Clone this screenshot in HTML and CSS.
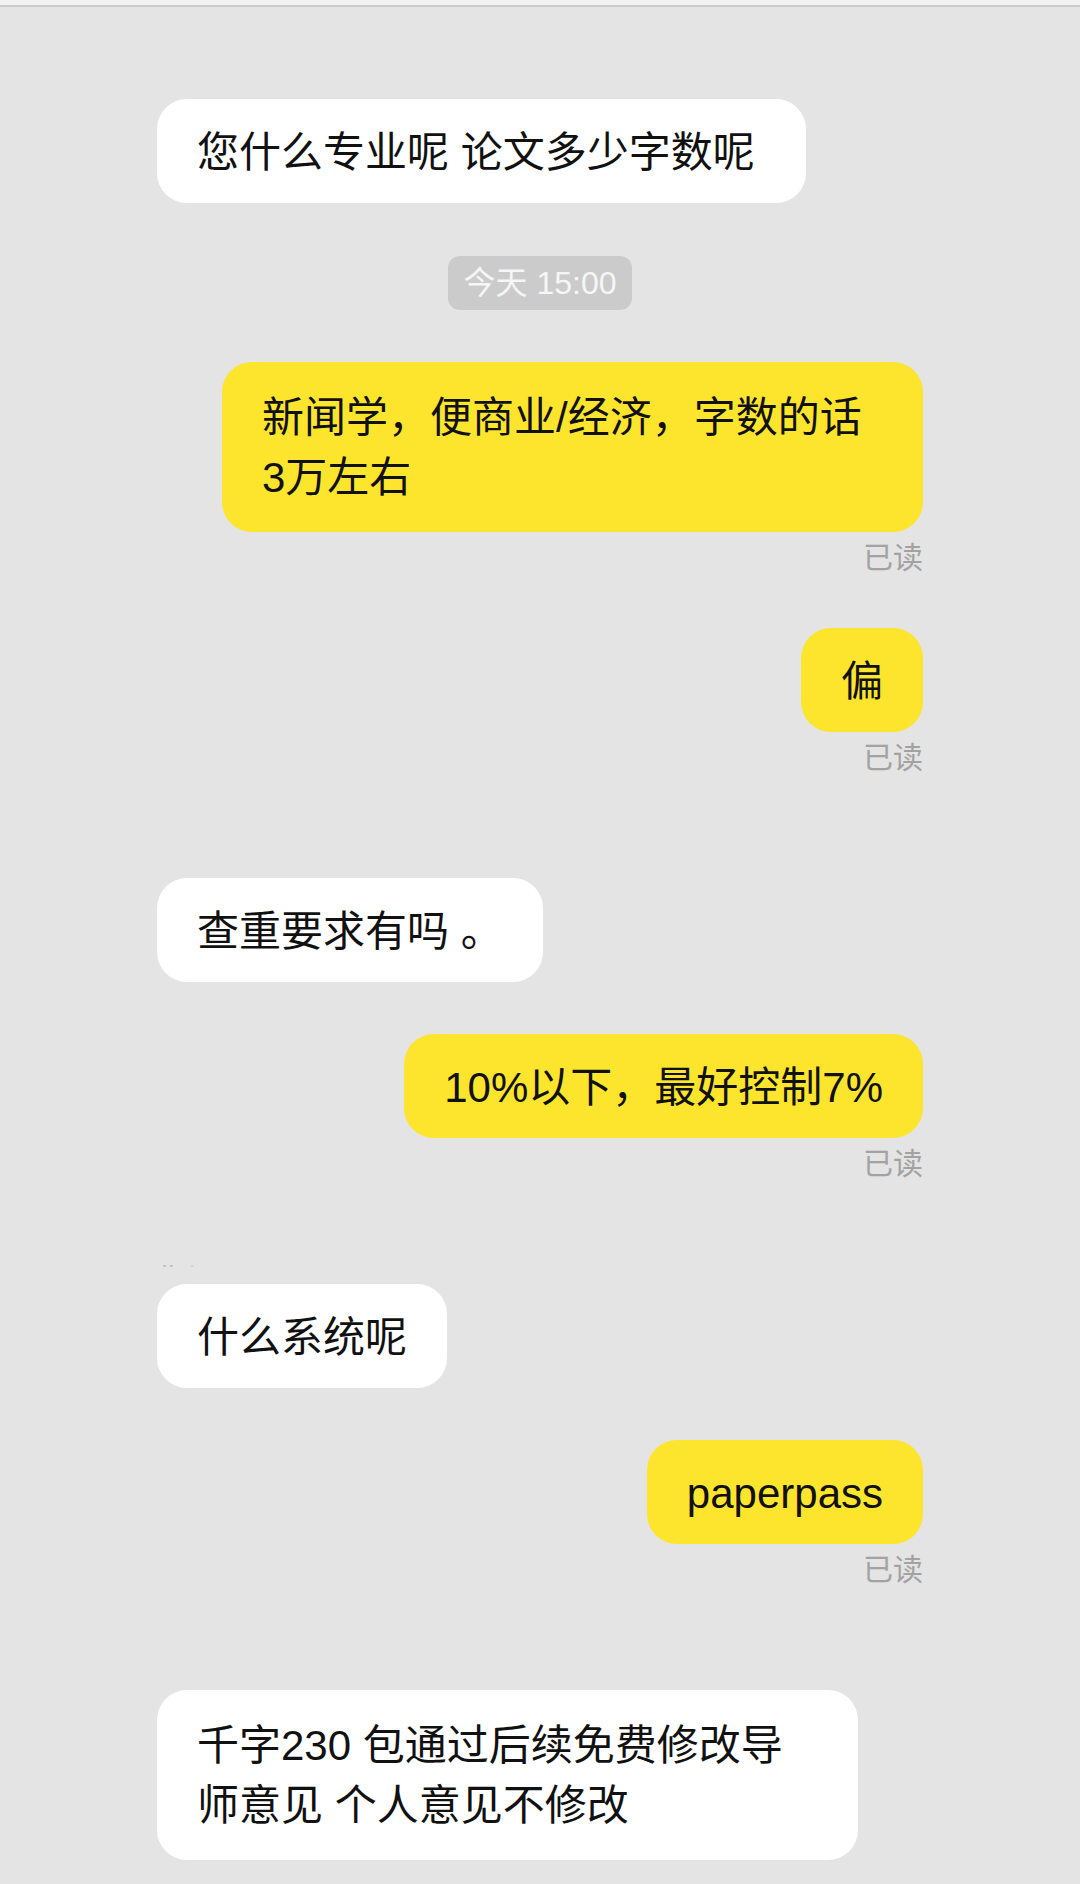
FILE: index.html
```html
<!DOCTYPE html>
<html lang="zh-CN">
<head>
<meta charset="utf-8">
<title>聊天</title>
<link rel="stylesheet" href="styles.css">
</head>
<body>
<div class="top-bar"></div>
<div class="chat">
  <div class="msg in first">
    <div class="bubble">您什么专业呢 论文多少字数呢&nbsp;</div>
  </div>
  <div class="stamp">今天 15:00</div>
  <div class="msg out">
    <div class="bubble wide">新闻学，便商业/经济，字数的话<br>3万左右</div>
    <div class="read">已读</div>
  </div>
  <div class="msg out">
    <div class="bubble">偏</div>
    <div class="read">已读</div>
  </div>
  <div class="msg in turn">
    <div class="bubble">查重要求有吗 。</div>
  </div>
  <div class="msg out">
    <div class="bubble">10%以下，最好控制7%</div>
    <div class="read">已读</div>
  </div>
  <div class="dots"><span></span><span></span><span class="far"></span></div>
  <div class="msg in after-dots">
    <div class="bubble">什么系统呢</div>
  </div>
  <div class="msg out">
    <div class="bubble">paperpass</div>
    <div class="read">已读</div>
  </div>
  <div class="msg in turn">
    <div class="bubble wide">千字230 包通过后续免费修改导<br>师意见 个人意见不修改</div>
  </div>
</div>
</body>
</html>
```
FILE: styles.css
```css
html, body {
  margin: 0;
  padding: 0;
}
body {
  width: 1080px;
  height: 1884px;
  overflow: hidden;
  background: #e4e4e4;
  font-family: "Liberation Sans", "Noto Sans CJK SC", sans-serif;
  color: #111;
}
.top-bar {
  height: 5px;
  background: #f2f2f2;
  border-bottom: 2px solid #cacaca;
}
.chat {
  display: flex;
  flex-direction: column;
  padding: 0 157px;
}
.msg {
  display: flex;
  flex-direction: column;
  margin-top: 52px;
}
.msg.first {
  margin-top: 92px;
}
.msg.turn {
  margin-top: 102px;
}
.msg.after-dots {
  margin-top: 16px;
}
.msg.in {
  align-items: flex-start;
}
.msg.out {
  align-items: flex-end;
}
.bubble {
  font-size: 42px;
  line-height: 60px;
  padding: 24px 40px 20px;
  border-radius: 30px;
  background: #ffffff;
  white-space: nowrap;
}
.msg.out .bubble {
  background: #fde52e;
}
.bubble.wide {
  width: 701px;
  box-sizing: border-box;
  padding: 26px 40px 24px;
}
.read {
  margin-top: 8px;
  font-size: 30px;
  line-height: 36px;
  color: #a2a2a2;
}
.stamp {
  align-self: center;
  margin-top: 53px;
  padding: 0 16px;
  height: 54px;
  line-height: 54px;
  font-size: 32px;
  color: #f6f6f6;
  background: #cbcbcb;
  border-radius: 12px;
}
.dots {
  display: flex;
  gap: 4px;
  margin-top: 82px;
  height: 4px;
  padding-left: 6px;
  align-items: center;
}
.dots span {
  width: 3px;
  height: 2px;
  background: #c4c4c4;
}
.dots span.far {
  margin-left: 14px;
  background: #d6d6d6;
}
```
